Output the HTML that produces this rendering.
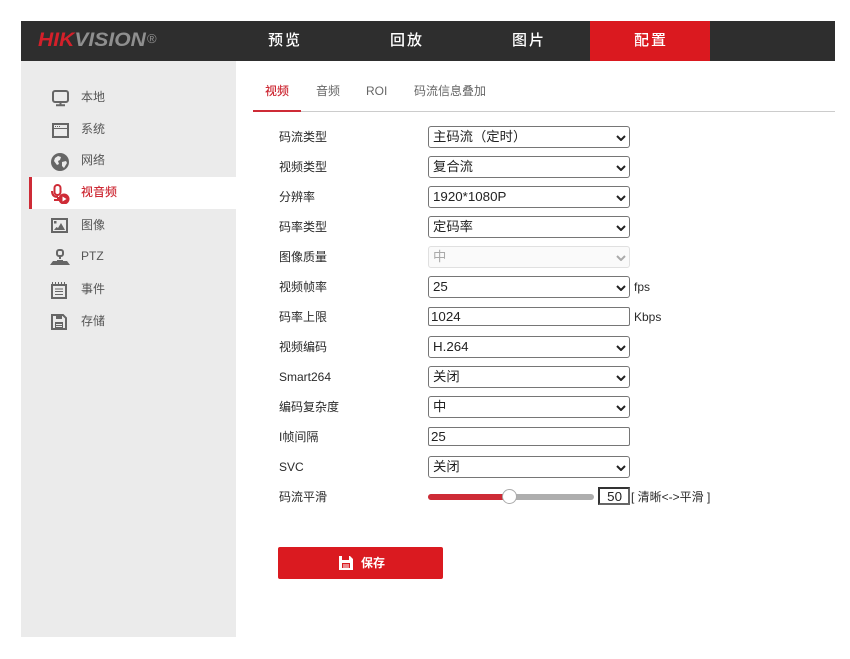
<!DOCTYPE html>
<html lang="zh"><head><meta charset="utf-8"><title>配置</title>
<style>
html,body{margin:0;padding:0;background:#fff;}
body{width:850px;height:659px;position:relative;overflow:hidden;font:12px "Liberation Sans","Noto Sans CJK SC",sans-serif;color:#333;}
.a{position:absolute;white-space:nowrap;}
#hd{left:21px;top:21px;width:814px;height:40px;background:#2e2e2e;}
#side{left:21px;top:61px;width:215px;height:576px;background:#ebebeb;}
#act{left:29px;top:177px;width:204px;height:32px;background:#fff;border-left:3px solid #ce2b36;}
.nav{top:21px;height:40px;line-height:40px;width:120px;text-align:center;color:#fff;font-size:15px;letter-spacing:2px;font-weight:500;}
.logo{left:38px;top:29px;font:italic bold 19px/24px "Liberation Sans",sans-serif;letter-spacing:0;color:#8f8f8f;transform:scaleX(1.11);transform-origin:0 0;}
.logo b{color:#d3202a;}
.reg{left:147px;top:29px;font:13px/20px "Liberation Sans",sans-serif;color:#8f8f8f;}
.m{left:81px;height:16px;line-height:16px;color:#555;}
.ic{position:absolute;left:50px;}
.tab{top:83px;line-height:16px;color:#666;}
.l{left:279px;line-height:16px;color:#2a2a2a;}
select{position:absolute;left:428px;width:202px;height:22px;margin:0;font:13.33px "Liberation Sans","Noto Sans CJK SC",sans-serif;color:#222;background:#fff;border:1px solid #767676;border-radius:3px;padding:0 0 2px 4px;box-sizing:border-box;appearance:none;-webkit-appearance:none;}
select:disabled{background:#fafafa;color:#aaa;border-color:#e0e0e0;opacity:1;}
input{position:absolute;left:428px;width:202px;height:19px;margin:0;box-sizing:border-box;border:1px solid #767676;border-radius:2px;padding:0 2px;font:13.33px "Liberation Sans",sans-serif;color:#222;background:#fff;}
.c{position:absolute;left:616px;pointer-events:none;}
</style></head><body>
<div class="a" id="hd"></div>
<div class="a logo"><b>HIK</b>VISION</div><div class="a reg">®</div>
<div class="a nav" style="left:225px">预览</div>
<div class="a nav" style="left:347px">回放</div>
<div class="a nav" style="left:469px">图片</div>
<div class="a" style="left:590px;top:21px;width:120px;height:40px;background:#da191f"></div>
<div class="a nav" style="left:591px">配置</div>

<div class="a" id="side"></div>
<div class="a" id="act"></div>

<svg class="ic" style="top:89px" width="20" height="18" viewBox="0 0 20 18"><rect x="3" y="2" width="15" height="11" rx="2" fill="none" stroke="#666" stroke-width="2"/><path d="M10.500 13v3M6 16.200h9" stroke="#666" stroke-width="2" fill="none"/></svg>
<div class="a m" style="top:89px">本地</div>

<svg class="ic" style="top:121px" width="20" height="18" viewBox="0 0 20 18"><rect x="3" y="3" width="15" height="13" fill="none" stroke="#666" stroke-width="2"/><path d="M3 7.500h15" stroke="#666"/><path d="M5 5.500h1M7 5.500h1M9 5.500h1" stroke="#666"/></svg>
<div class="a m" style="top:121px">系统</div>

<svg class="ic" style="top:152px" width="20" height="20" viewBox="0 0 20 20"><circle cx="10" cy="10" r="9" fill="#666"/><path d="M5 6l3-2 3 1-1 3-2 1 1 3-2 1-3-4zM12 10l4-1 1 2-3 5-2-2z" fill="#ebebeb"/></svg>
<div class="a m" style="top:152px">网络</div>

<svg class="ic" style="top:184px" width="20" height="20" viewBox="0 0 20 20"><rect x="4.500" y="1" width="6" height="10" rx="3" fill="none" stroke="#ce2b36" stroke-width="2"/><path d="M2 7c0 4 2 6 6 6M8 13v3H4" fill="none" stroke="#ce2b36" stroke-width="2"/><circle cx="14" cy="15" r="5.500" fill="#ce2b36"/><path d="M12.500 12.500l4 2.500-4 2.500z" fill="#fff"/></svg>
<div class="a m" style="top:184px;color:#ce2b36;font-weight:500">视音频</div>

<svg class="ic" style="top:217px" width="20" height="18" viewBox="0 0 20 18"><rect x="2" y="2" width="15" height="13" fill="none" stroke="#666" stroke-width="2"/><rect x="4" y="4" width="2.500" height="2.500" fill="#666"/><path d="M4 13l2.500-3 1.500 1 3-5 4 7z" fill="#666"/></svg>
<div class="a m" style="top:217px">图像</div>

<svg class="ic" style="top:248px" width="20" height="18" viewBox="0 0 20 18"><rect x="7" y="2" width="6" height="6" rx="2" fill="none" stroke="#666" stroke-width="2"/><path d="M9 8h2v3H9z" fill="#666"/><path d="M0 17l3-4h4v-1h6v1h4l3 4z" fill="#666"/></svg>
<div class="a m" style="top:248px">PTZ</div>

<svg class="ic" style="top:281px" width="20" height="19" viewBox="0 0 20 19"><rect x="2" y="4" width="14" height="13" fill="none" stroke="#666" stroke-width="2"/><path d="M2.500 1v3M5.500 1v3M8.500 1v3M11.500 1v3M14.500 1v3" stroke="#666"/><path d="M5 8h8M5 10.500h8M5 13.500h8" stroke="#666"/></svg>
<div class="a m" style="top:281px">事件</div>

<svg class="ic" style="top:313px" width="20" height="18" viewBox="0 0 20 18"><path d="M2 2h11l3 3v11H2z" fill="none" stroke="#666" stroke-width="2"/><path d="M6 1h6v5H6z" fill="#666"/><path d="M5 9h8v7H5z" fill="#666"/><path d="M6 11.500h6M6 13.500h6" stroke="#ebebeb"/></svg>
<div class="a m" style="top:313px">存储</div>

<div class="a tab" style="left:265px;color:#ce2b36;font-weight:500">视频</div>
<div class="a tab" style="left:316px">音频</div>
<div class="a tab" style="left:366px">ROI</div>
<div class="a tab" style="left:414px">码流信息叠加</div>
<div class="a" style="left:253px;top:111px;width:582px;height:1px;background:#ccc"></div>
<div class="a" style="left:253px;top:110px;width:48px;height:2px;background:#ce2b36"></div>

<div class="a l" style="top:129px">码流类型</div>
<select style="top:126px"><option>主码流（定时）</option></select>
<svg class="c" style="top:135px" width="10" height="6"><path d="M1 1l4 4 4-4" fill="none" stroke="#222" stroke-width="2"/></svg>
<div class="a l" style="top:159px">视频类型</div>
<select style="top:156px"><option>复合流</option></select>
<svg class="c" style="top:165px" width="10" height="6"><path d="M1 1l4 4 4-4" fill="none" stroke="#222" stroke-width="2"/></svg>
<div class="a l" style="top:189px">分辨率</div>
<select style="top:186px"><option>1920*1080P</option></select>
<svg class="c" style="top:195px" width="10" height="6"><path d="M1 1l4 4 4-4" fill="none" stroke="#222" stroke-width="2"/></svg>
<div class="a l" style="top:219px">码率类型</div>
<select style="top:216px"><option>定码率</option></select>
<svg class="c" style="top:225px" width="10" height="6"><path d="M1 1l4 4 4-4" fill="none" stroke="#222" stroke-width="2"/></svg>
<div class="a l" style="top:249px">图像质量</div>
<select style="top:246px" disabled><option>中</option></select>
<svg class="c" style="top:255px" width="10" height="6"><path d="M1 1l4 4 4-4" fill="none" stroke="#aaa" stroke-width="2"/></svg>
<div class="a l" style="top:279px">视频帧率</div>
<select style="top:276px"><option>25</option></select>
<svg class="c" style="top:285px" width="10" height="6"><path d="M1 1l4 4 4-4" fill="none" stroke="#222" stroke-width="2"/></svg>
<div class="a l" style="left:634px;top:279px">fps</div>
<div class="a l" style="top:309px">码率上限</div>
<input style="top:307px" value="1024">
<div class="a l" style="left:634px;top:309px">Kbps</div>
<div class="a l" style="top:339px">视频编码</div>
<select style="top:336px"><option>H.264</option></select>
<svg class="c" style="top:345px" width="10" height="6"><path d="M1 1l4 4 4-4" fill="none" stroke="#222" stroke-width="2"/></svg>
<div class="a l" style="top:369px">Smart264</div>
<select style="top:366px"><option>关闭</option></select>
<svg class="c" style="top:375px" width="10" height="6"><path d="M1 1l4 4 4-4" fill="none" stroke="#222" stroke-width="2"/></svg>
<div class="a l" style="top:399px">编码复杂度</div>
<select style="top:396px"><option>中</option></select>
<svg class="c" style="top:405px" width="10" height="6"><path d="M1 1l4 4 4-4" fill="none" stroke="#222" stroke-width="2"/></svg>
<div class="a l" style="top:429px">I帧间隔</div>
<input style="top:427px" value="25">
<div class="a l" style="top:459px">SVC</div>
<select style="top:456px"><option>关闭</option></select>
<svg class="c" style="top:465px" width="10" height="6"><path d="M1 1l4 4 4-4" fill="none" stroke="#222" stroke-width="2"/></svg>
<div class="a l" style="top:489px">码流平滑</div>

<div class="a" style="left:428px;top:494px;width:166px;height:6px;border-radius:3px;background:#aeaeae"></div>
<div class="a" style="left:428px;top:494px;width:82px;height:6px;border-radius:3px 0 0 3px;background:#ce2b36"></div>
<div class="a" style="left:502px;top:489px;width:13px;height:13px;border-radius:50%;background:#fff;border:1px solid #aaa"></div>
<div class="a" style="left:598px;top:487px;width:32px;height:18px;box-sizing:border-box;border:2px solid #333;border-right-color:#666;border-bottom-color:#666;font-size:13.33px;line-height:15px;text-align:right;padding-right:6px;color:#222">50</div>
<div class="a l" style="left:631px;top:489px">[ 清晰&lt;-&gt;平滑 ]</div>

<div class="a" style="left:278px;top:547px;width:165px;height:32px;background:#da1a20;border-radius:2px"></div>
<svg class="a" style="left:339px;top:555px" width="14" height="16" viewBox="0 0 14 16"><path d="M0 1h11l3 3v11H0z" fill="#fff"/><path d="M3 1h7v4H3z" fill="#da1a20"/><path d="M3 8h8v5H3z" fill="#da1a20"/><path d="M4 10h6M4 12h6" stroke="#fff"/></svg>
<div class="a" style="left:361px;top:555px;line-height:16px;color:#fff;font-weight:700">保存</div>
</body></html>
